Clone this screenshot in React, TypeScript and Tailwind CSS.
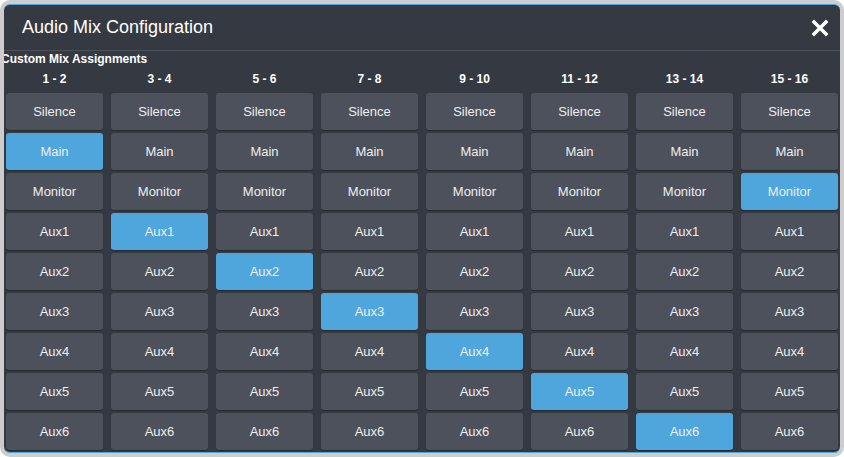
const COLUMNS = ['1 - 2', '3 - 4', '5 - 6', '7 - 8', '9 - 10', '11 - 12', '13 - 14', '15 - 16'];
const MIXES = ['Silence', 'Main', 'Monitor', 'Aux1', 'Aux2', 'Aux3', 'Aux4', 'Aux5', 'Aux6'];

// selected mix per column
const SELECTED = ['Main', 'Aux1', 'Aux2', 'Aux3', 'Aux4', 'Aux5', 'Aux6', 'Monitor'];

function CloseIcon() {
  return (
    <svg viewBox="0 0 18 18" className="h-[18px] w-[18px]">
      <path d="M3 3 L15 15 M15 3 L3 15" stroke="#ffffff" strokeWidth="3.4" strokeLinecap="square" />
    </svg>
  );
}

export default function App() {
  return (
    <div className="h-[457px] w-[844px] bg-white font-['Liberation_Sans',Arial,sans-serif]">
      <div className="h-[457px] w-[844px] rounded-[10px] border-[4px] border-[#cdcdcd] bg-[#cdcdcd]">
        <div className="flex h-full flex-col overflow-hidden rounded-[6px] border-y border-[#4ea6dc] bg-[#353a42]">
          <div className="flex h-[45px] items-center justify-between pl-[18px] pr-[11px]">
            <div className="text-[18px] text-white">Audio Mix Configuration</div>
            <CloseIcon />
          </div>
          <div className="h-px bg-[#4b5159]" />
          <div className="-ml-[3px] mt-px text-[12px] font-bold leading-[14px] text-white">Custom Mix Assignments</div>
          <div className="grid grid-cols-[repeat(8,97px)] gap-x-[8px] pl-[2px]">
            {COLUMNS.map((c) => (
              <div key={c} className="h-[26px] text-center text-[12px] font-bold leading-[26px] text-white">
                {c}
              </div>
            ))}
          </div>
          <div className="grid grid-flow-col grid-cols-[repeat(8,97px)] grid-rows-[repeat(9,37px)] gap-x-[8px] gap-y-[3px] pl-[2px] pt-[1px]">
            {COLUMNS.map((c, ci) =>
              MIXES.map((m) => {
                const active = SELECTED[ci] === m;
                return (
                  <div
                    key={c + m}
                    className={`flex items-center justify-center rounded-[3px] text-[13px] text-[#eeeeee] shadow-[0_1px_0_rgba(0,0,0,0.25)] ${
                      active ? 'bg-[#4ea6dc]' : 'bg-[#4d515c]'
                    }`}
                  >
                    {m}
                  </div>
                );
              })
            )}
          </div>
        </div>
      </div>
    </div>
  );
}
